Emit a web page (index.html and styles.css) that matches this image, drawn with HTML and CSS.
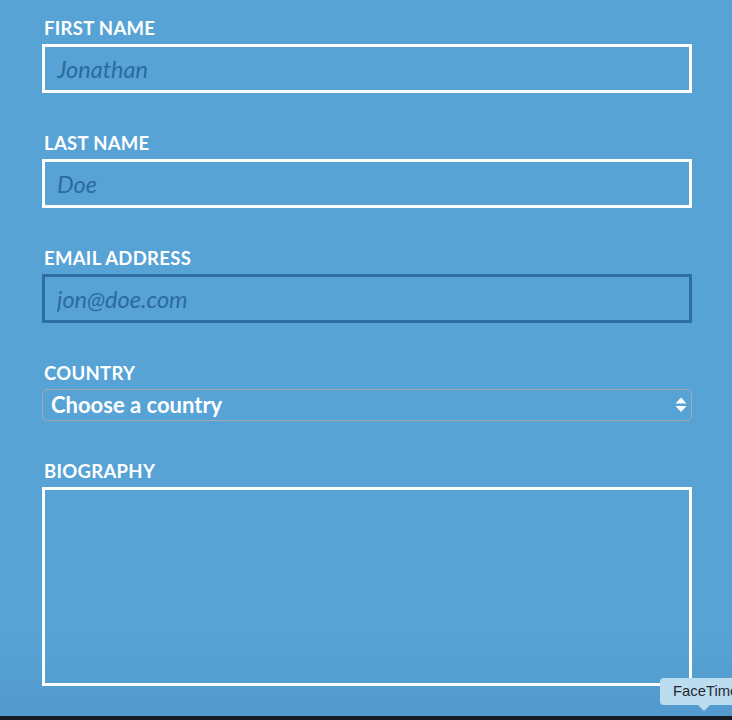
FILE: index.html
```html
<!DOCTYPE html>
<html>
<head>
<meta charset="utf-8">
<link rel="stylesheet" href="styles.css">
</head>
<body>
<div class="page">
  <form class="form">
    <label class="label" for="fn">First Name</label>
    <input class="field" id="fn" type="text" placeholder="Jonathan">

    <label class="label" for="ln">Last Name</label>
    <input class="field" id="ln" type="text" placeholder="Doe">

    <label class="label" for="em">Email Address</label>
    <input class="field field-focus" id="em" type="text" placeholder="jon@doe.com">

    <label class="label" for="co">Country</label>
    <div class="select">
      <span class="select-text">Choose a country</span>
      <svg class="select-arrows" width="12" height="16" viewBox="0 0 12 16"><path d="M6 0.5 L11.5 6.5 L0.5 6.5 Z" fill="#fff"/><path d="M0.5 9 L11.5 9 L6 15 Z" fill="#fff"/></svg>
    </div>

    <label class="label" for="bio">Biography</label>
    <textarea class="area" id="bio"></textarea>
  </form>
  <div class="tooltip">FaceTime</div>
  <div class="bottombar"></div>
</div>
</body>
</html>
```
FILE: styles.css
```css
html, body {
  margin: 0;
  padding: 0;
}
body {
  background: #57a3d6;
  width: 732px;
  height: 720px;
  overflow: hidden;
  font-family: Lato, "Liberation Sans", sans-serif;
}
.page {
  position: relative;
  width: 732px;
  height: 720px;
  background: linear-gradient(to bottom, #57a3d6 0%, #57a3d6 88%, #5299cd 100%);
}
.form {
  display: flex;
  flex-direction: column;
  padding: 18px 0 0 42px;
  width: 650px;
}
.label {
  display: block;
  color: #fff;
  font-weight: 700;
  font-size: 18.5px;
  line-height: 20px;
  text-transform: uppercase;
  letter-spacing: 0.3px;
  margin: 0 0 6px 2px;
}
.field {
  box-sizing: border-box;
  width: 650px;
  height: 49px;
  margin: 0 0 40px 0;
  border: 3px solid #fff;
  background: transparent;
  padding: 0 12px;
  font-family: Lato, "Liberation Sans", sans-serif;
  font-style: italic;
  font-size: 23.5px;
  color: #2b6b9f;
  outline: none;
}
.field::placeholder {
  color: #2b6b9f;
  opacity: 1;
}
.field-focus {
  border-color: #2c6da3;
}
.select {
  box-sizing: border-box;
  width: 650px;
  height: 32px;
  margin: 0 0 40px 0;
  border: 1px solid #a3a9b0;
  border-radius: 5px;
  display: flex;
  align-items: center;
  justify-content: space-between;
  padding: 0 4px 0 8px;
}
.select-text {
  color: #fff;
  font-weight: 700;
  font-size: 22px;
  line-height: 30px;
}
.select-arrows {
  display: block;
}
.area {
  box-sizing: border-box;
  width: 650px;
  height: 199px;
  border: 3px solid #fff;
  background: transparent;
  resize: none;
  outline: none;
  margin: 0;
}
.tooltip {
  position: absolute;
  left: 660px;
  top: 678px;
  height: 27px;
  padding: 0 20px 0 13px;
  background: #bcdcef;
  border-radius: 4px;
  color: #1e2a36;
  font-family: "Liberation Sans", Arial, sans-serif;
  font-size: 14.8px;
  line-height: 27px;
  white-space: nowrap;
}
.tooltip::after {
  content: "";
  position: absolute;
  left: 38px;
  top: 27px;
  border-left: 6px solid transparent;
  border-right: 6px solid transparent;
  border-top: 6px solid #bcdcef;
}
.bottombar {
  position: absolute;
  left: 0;
  bottom: 0;
  width: 732px;
  height: 4px;
  background: #181b21;
}
```
